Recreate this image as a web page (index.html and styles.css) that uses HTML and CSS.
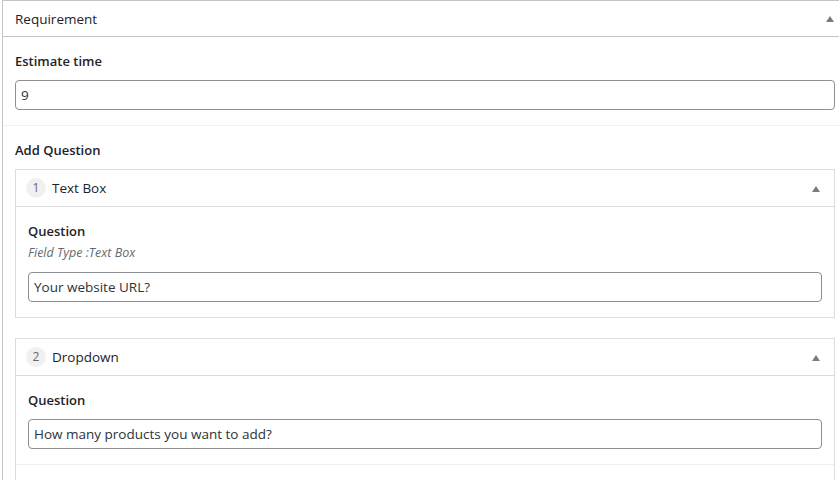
FILE: index.html
```html
<!DOCTYPE html>
<html>
<head>
<meta charset="utf-8">
<link rel="stylesheet" href="styles.css">
</head>
<body>
<div class="postbox">
  <div class="postbox-header">
    <h2 class="postbox-title">Requirement</h2>
    <span class="toggle"></span>
  </div>
  <div class="section">
    <label class="field-label">Estimate time</label>
    <div class="input">9</div>
  </div>
  <div class="section section-questions">
    <div class="field-label">Add Question</div>
    <div class="qbox">
      <div class="qbox-header">
        <span class="num">1</span>
        <span class="qtype">Text Box</span>
        <span class="toggle"></span>
      </div>
      <div class="qrow">
        <div class="field-label">Question</div>
        <div class="hint">Field Type :Text Box</div>
        <div class="input">Your website URL?</div>
      </div>
    </div>
    <div class="qbox">
      <div class="qbox-header">
        <span class="num">2</span>
        <span class="qtype">Dropdown</span>
        <span class="toggle"></span>
      </div>
      <div class="qrow qrow-sep">
        <div class="field-label">Question</div>
        <div class="input">How many products you want to add?</div>
      </div>
      <div class="qrow qrow-more"></div>
    </div>
  </div>
</div>
</body>
</html>
```
FILE: styles.css
```css
html, body {
  margin: 0;
  padding: 0;
  overflow: hidden;
  background: #fff;
}
body {
  font-family: "Open Sans", "Noto Sans", sans-serif;
  font-size: 13px;
  color: #1d2327;
}
.postbox {
  margin-left: 2px;
  width: 846px;
  box-sizing: border-box;
  border: 1px solid #c3c4c7;
  background: #fff;
}
.postbox-header {
  display: flex;
  align-items: center;
  height: 35px;
  border-bottom: 1px solid #c3c4c7;
  padding: 0 13px 0 12px;
}
.postbox-title {
  flex: 1;
  margin: 0;
  font-size: 13.5px;
  font-weight: 400;
  line-height: 20px;
}
.toggle {
  width: 0;
  height: 0;
  border-left: 4px solid transparent;
  border-right: 4px solid transparent;
  border-bottom: 6px solid #787c82;
  margin-top: 1px;
}
.section {
  padding: 14px 12px 15px;
  border-bottom: 1px solid #f0f0f1;
  display: flex;
  flex-direction: column;
}
.section-questions {
  padding-bottom: 0;
  border-bottom: none;
}
.field-label {
  font-weight: 600;
  font-size: 13px;
  line-height: 20px;
  margin-bottom: 9px;
}
.input {
  height: 30px;
  box-sizing: border-box;
  border: 1px solid #8c8f94;
  border-radius: 4px;
  padding: 0 5px;
  line-height: 28px;
  font-size: 13.5px;
  color: #2c3338;
}
.qbox {
  border: 1px solid #dcdcde;
  margin-bottom: 20px;
}
.qbox-header {
  display: flex;
  align-items: center;
  height: 36px;
  border-bottom: 1px solid #dcdcde;
  padding: 0 14px 0 10px;
}
.num {
  width: 20px;
  height: 20px;
  border-radius: 50%;
  background: #f0f0f1;
  color: #646970;
  font-size: 12px;
  line-height: 20px;
  text-align: center;
  margin-right: 6px;
}
.qtype {
  flex: 1;
  font-size: 13.5px;
}
.qrow {
  padding: 14px 12px 15px;
  display: flex;
  flex-direction: column;
}
.qrow .field-label {
  margin-bottom: 2px;
}
.qrow-sep .field-label {
  margin-bottom: 9px;
}
.hint {
  font-style: italic;
  color: #646970;
  font-size: 12.5px;
  line-height: 20px;
  margin-bottom: 9px;
}
.qrow-sep {
  border-bottom: 1px solid #f0f0f1;
}
.qrow-more {
  height: 60px;
}
```
